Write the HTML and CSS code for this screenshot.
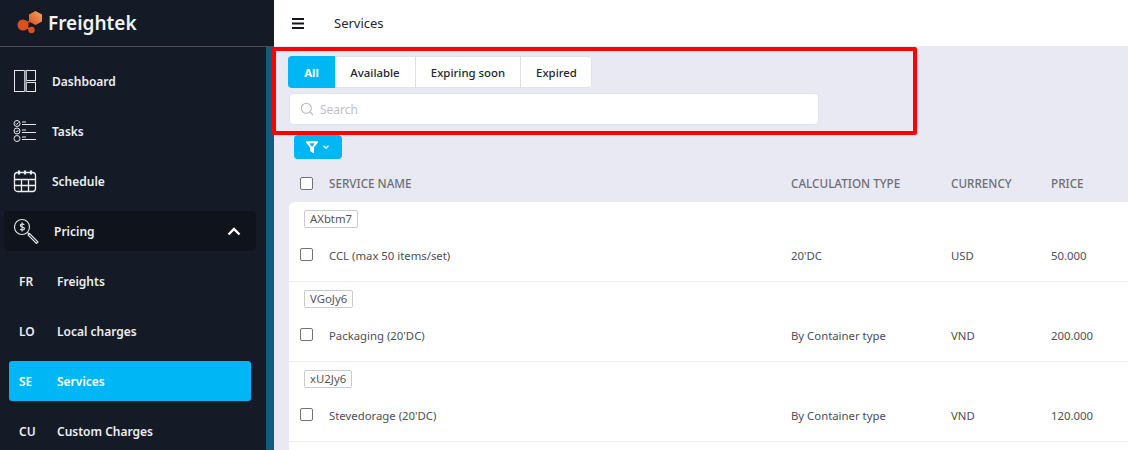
FILE: index.html
```html
<!doctype html>
<html lang="en">
	<head>
		<meta charset="UTF-8">
		<title>Services</title>
		<link rel="stylesheet" href="styles.css">
	</head>
	<body>
		<div class="page">
			<aside class="sidebar">
				<div class="brand">
					<svg class="logo" width="26" height="24" viewBox="0 0 26 24">
						<defs>
							<linearGradient id="logograd" x1="0" y1="1" x2="1" y2="0">
								<stop offset="0" stop-color="#dc4f1e"></stop>
								<stop offset="1" stop-color="#f6a862"></stop>
							</linearGradient>
						</defs>
						<path d="M6 14L14 19M6 14L15 9" stroke="#d9501f" stroke-width="2"></path>
						<polygon points="18.500,0 25,3.500 25,10.500 18.500,14 12,10.500 12,3.500" fill="url(#logograd)"></polygon>
						<circle cx="6" cy="14" r="5.500" fill="#dc501f"></circle>
						<circle cx="14.500" cy="19" r="3.200" fill="#dc501f"></circle>
					</svg>
					<span class="brand-name">Freightek</span>
				</div>
				<nav class="nav">
					<a class="item">
						<svg class="ico" width="24" height="24" viewBox="0 0 24 24" fill="none" stroke="#e4e6ea" stroke-width="1">
							<rect x="1.500" y="1.500" width="10" height="21"></rect>
							<rect x="13.500" y="1.500" width="9" height="10"></rect>
							<rect x="13.500" y="13.500" width="9" height="9"></rect>
							<path d="M12.500 1v22" stroke="#8a8e96" stroke-width="2"></path>
						</svg>
						<span>Dashboard</span>
					</a>
					<a class="item">
						<svg class="ico" width="24" height="24" viewBox="0 0 24 24" fill="none" stroke="#e4e6ea" stroke-width="1">
							<circle cx="4" cy="4.500" r="3"></circle>
							<circle cx="4" cy="12" r="3"></circle>
							<circle cx="4" cy="19.500" r="3"></circle>
							<path d="M2.600 4.500l1.100 1.100 1.800-2.200M2.600 12l1.100 1.100 1.800-2.200"></path>
							<path d="M9 3h4M9 5.500h14M9 11h4M9 13.500h14M9 18h4M9 20.500h14"></path>
						</svg>
						<span>Tasks</span>
					</a>
					<a class="item">
						<svg class="ico" width="24" height="24" viewBox="0 0 24 24" fill="none" stroke="#eceef1" stroke-width="1.300">
							<rect x="1.500" y="3.500" width="21" height="19" rx="3"></rect>
							<path d="M1.500 10.500h21M1.500 16.500h21M8.500 10.500v12M15.500 10.500v12"></path>
							<path d="M6 1.500v4M12 1.500v4M18 1.500v4" stroke-width="2.200"></path>
						</svg>
						<span>Schedule</span>
					</a>
					<a class="item open">
						<svg class="ico" width="26" height="26" viewBox="0 0 26 26" fill="none" stroke="#e4e6ea" stroke-width="1.100">
							<circle cx="8" cy="9" r="7.500"></circle>
							<path d="M13.500 14.500l2 2"></path>
							<path d="M15.500 15.500l8.500 8.500-1.500 1.500-8.500-8.500z"></path>
							<path d="M10.300 6.800c-.7-1-4-1-4 .8 0 2 4.200 1 4.200 3 0 1.800-3.300 1.700-4.400.6M8 4.500v9"></path>
						</svg>
						<span>Pricing</span>
						<svg class="chevron" width="14" height="9" viewBox="0 0 14 9" fill="none" stroke="#fff" stroke-width="2.400">
							<path d="M1.500 7.500L7 2l5.500 5.500"></path>
						</svg>
					</a>
					<a class="item sub"><b>FR</b><span>Freights</span></a>
					<a class="item sub"><b>LO</b><span>Local charges</span></a>
					<a class="item sub active"><b>SE</b><span>Services</span></a>
					<a class="item sub"><b>CU</b><span>Custom Charges</span></a>
				</nav>
			</aside>
			<div class="strip"></div>
			<main class="main">
				<header class="topbar">
					<svg width="12" height="11" viewBox="0 0 12 11" fill="#15151a">
						<rect x="0" y="0" width="12" height="2"></rect>
						<rect x="0" y="4.500" width="12" height="2"></rect>
						<rect x="0" y="9" width="12" height="2"></rect>
					</svg>
					<span class="crumb">Services</span>
				</header>
				<section class="content">
					<div class="tabs">
						<button class="tab on">All</button>
						<button class="tab t2">Available</button>
						<button class="tab t3">Expiring soon</button>
						<button class="tab t4">Expired</button>
					</div>
					<div class="search">
						<svg width="14" height="14" viewBox="0 0 14 14" fill="none" stroke="#b4b8c0" stroke-width="1.100">
							<circle cx="6.300" cy="6.300" r="5"></circle>
							<path d="M10 10l3 3"></path>
						</svg>
						<span>Search</span>
					</div>
					<button class="filter">
						<svg width="12" height="12" viewBox="0 0 12 12" fill="none" stroke="#fff" stroke-width="2">
							<path d="M1 1.200h10L7 6v4.800L5 9.500V6z"></path>
						</svg>
						<svg width="6" height="4" viewBox="0 0 6 4" fill="none" stroke="#fff" stroke-width="1.300">
							<path d="M.5 .7L3 3 5.500 .7"></path>
						</svg>
					</button>
					<div class="grid head">
						<span class="check"></span>
						<span>SERVICE NAME</span>
						<span>CALCULATION TYPE</span>
						<span>CURRENCY</span>
						<span>PRICE</span>
					</div>
					<div class="rows">
						<div class="row">
							<span class="code">AXbtm7</span>
							<div class="grid">
								<span class="check"></span>
								<span>CCL (max 50 items/set)</span>
								<span>20'DC</span>
								<span>USD</span>
								<span>50.000</span>
							</div>
						</div>
						<div class="row">
							<span class="code">VGoJy6</span>
							<div class="grid">
								<span class="check"></span>
								<span>Packaging (20'DC)</span>
								<span>By Container type</span>
								<span>VND</span>
								<span>200.000</span>
							</div>
						</div>
						<div class="row">
							<span class="code">xU2Jy6</span>
							<div class="grid">
								<span class="check"></span>
								<span>Stevedorage (20'DC)</span>
								<span>By Container type</span>
								<span>VND</span>
								<span>120.000</span>
							</div>
						</div>
					</div>
				</section>
			</main>
		</div>
		<div class="redbox"></div>
	</body>
</html>
```

FILE: styles.css
```css
html, body
{
	margin: 0;
	height: 450px;
	overflow: hidden;
}
body
{
	font-family: "Noto Sans", "Open Sans", sans-serif;
	font-size: 11.350px;
	color: #4b4f58;
	background: #e9e9f3;
}
.page
{
	display: flex;
	height: 450px;
}
.sidebar
{
	flex: 0 0 266px;
	background: #151b26;
	color: #eceef1;
}
.brand
{
	display: flex;
	align-items: center;
	gap: 5px;
	height: 46px;
	padding-left: 17px;
	border-bottom: 1px solid #4a4e56;
}
.brand-name
{
	font-size: 19px;
	font-weight: 600;
	color: #f2f3f5;
}
.nav
{
	padding-top: 9px;
}
.item
{
	display: flex;
	align-items: center;
	height: 50px;
	padding-left: 13px;
	font-weight: 600;
	font-size: 12px;
}
.ico
{
	flex: none;
	margin-right: 15px;
}
.open
{
	height: 40px;
	margin: 5px 10px 5px 4px;
	padding-left: 10px;
	background: #0f131b;
	border-radius: 4px;
}
.open .ico
{
	margin-right: 14px;
}
.chevron
{
	margin-left: auto;
	margin-right: 15px;
}
.sub
{
	padding-left: 19px;
}
.sub b
{
	flex: 0 0 38px;
	font-weight: 600;
}
.active
{
	height: 40px;
	margin: 5px 15px 5px 9px;
	padding-left: 10px;
	background: #00b6f5;
	border-radius: 3px;
	color: #fff;
}
.strip
{
	flex: 0 0 8px;
	border-top: 46px solid #151b26;
	background: linear-gradient(#4a4e56 1px, #0d5f7f 1px);
}
.main
{
	flex: 1;
	min-width: 0;
}
.topbar
{
	display: flex;
	align-items: center;
	height: 46px;
	padding-left: 18px;
	background: #fff;
	color: #26282d;
}
.crumb
{
	margin-left: 30px;
	font-size: 13px;
}
.content
{
	padding: 10px 0 0 14px;
}
.tabs
{
	display: flex;
	height: 32px;
	width: 304px;
	background: #fff;
	border-radius: 4px;
	box-shadow: 0 0 0 1px #e2e3ea inset;
}
.tab
{
	height: 32px;
	padding: 0;
	border: 0;
	border-right: 1px solid #dfe0e7;
	background: none;
	font-family: inherit;
	font-size: 11.400px;
	font-weight: 500;
	color: #23262c;
}
.on
{
	width: 47px;
	background: #00b6f5;
	color: #fff;
	font-weight: 700;
	border-right: 0;
	border-radius: 4px 0 0 4px;
}
.t2
{
	width: 81px;
}
.t3
{
	width: 105px;
}
.t4
{
	width: 71px;
	border-right: 0;
}
.search
{
	display: flex;
	align-items: center;
	gap: 6px;
	width: 518px;
	height: 30px;
	margin: 5px 0 0 1px;
	padding-left: 10px;
	background: #fff;
	border: 1px solid #e0e1e9;
	border-radius: 4px;
	color: #bcc0c7;
	font-size: 12px;
}
.filter
{
	display: flex;
	align-items: center;
	gap: 5px;
	width: 48px;
	height: 24px;
	margin: 10px 0 0 6px;
	padding: 0 0 0 12px;
	border: 0;
	background: #00b6f5;
	border-radius: 4px;
}
.grid
{
	display: grid;
	grid-template-columns: 29px 462px 160px 100px 1fr;
	align-items: center;
	padding-left: 12px;
}
.head
{
	height: 38px;
	padding-top: 5px;
	font-weight: 500;
	font-size: 11.700px;
	color: #6d6f75;
}
.check
{
	width: 11px;
	height: 11px;
	background: #fff;
	border: 1px solid #6f7278;
	border-radius: 2px;
}
.rows
{
	height: 260px;
	margin-left: 1px;
	background: #fff;
	border-radius: 6px 0 0 0;
}
.row
{
	height: 79px;
	border-bottom: 1px solid #ebebf0;
}
.code
{
	display: inline-block;
	margin: 8px 0 0 15px;
	padding: 0 5px;
	height: 16px;
	line-height: 16px;
	border: 1px solid #c9cbd0;
	border-radius: 2px;
	color: #555;
}
.row .grid
{
	height: 20px;
	margin-top: 17px;
	padding-left: 11px;
}
.row .check
{
	margin-bottom: 2px;
}
.redbox
{
	position: absolute;
	left: 272px;
	top: 47px;
	width: 637px;
	height: 80px;
	border: 4px solid #fe0000;
	border-radius: 2px;
}
```
